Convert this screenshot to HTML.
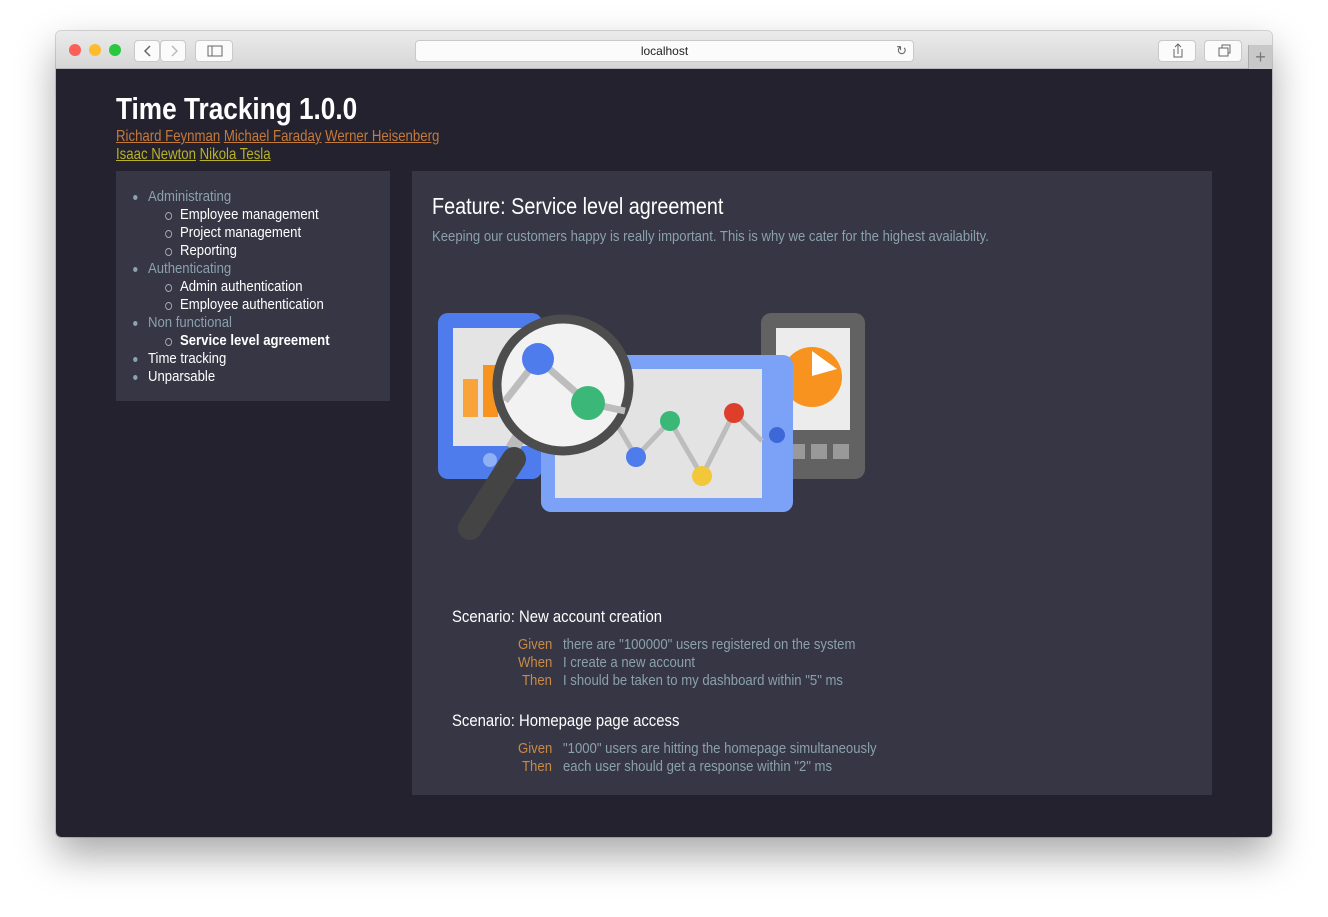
<!DOCTYPE html>
<html><head><meta charset="utf-8"><style>
*{box-sizing:border-box;margin:0;padding:0}
body{width:1328px;height:917px;background:#fff;position:relative;overflow:hidden;font-family:"Liberation Sans",sans-serif}
.win{position:absolute;left:56px;top:31px;width:1216px;height:806px;border-radius:5px;overflow:hidden;box-shadow:0 18px 40px rgba(0,0,0,.35),0 0 0 1px rgba(0,0,0,.15)}
.bar{position:absolute;left:0;top:0;width:100%;height:38px;background:linear-gradient(#ebebeb,#d6d6d6);border-bottom:1px solid #b8b8b8}
.dot{position:absolute;top:13px;width:12px;height:12px;border-radius:50%}
.btn{position:absolute;top:9px;height:22px;background:#fbfbfb;border:1px solid #c9c9c9;border-radius:4px}
.content{position:absolute;left:0;top:38px;width:100%;height:768px;background:#24222f}
a{text-decoration:underline}
.side{position:absolute;left:60px;top:102px;width:274px;height:230px;background:#373645}
.side div{position:absolute;font-size:15px;white-space:nowrap;transform:scaleX(.875);transform-origin:0 0;top:1px}
.b1:before{content:"";position:absolute;left:-17px;top:7px;width:5px;height:5px;border-radius:50%;background:#8aa4ad}
.b2:before{content:"";position:absolute;left:-17px;top:6px;width:6px;height:6px;border-radius:50%;border:1px solid #aab}
.main{position:absolute;left:356px;top:102px;width:800px;height:624px;background:#373645}
.t{position:absolute;white-space:nowrap;transform:scaleX(.875);transform-origin:0 0}
.k{color:#c98a43}.v{color:#8aa1ab}
</style></head><body>
<div class="win">
 <div class="bar">
  <div class="dot" style="left:13px;background:#fc5f57"></div>
  <div class="dot" style="left:33px;background:#fdbc2e"></div>
  <div class="dot" style="left:53px;background:#28c840"></div>
  <div class="btn" style="left:78px;width:26px"><svg width="26" height="20"><path d="M15 5l-5 5 5 5" stroke="#666" stroke-width="1.5" fill="none"/></svg></div>
  <div class="btn" style="left:104px;width:26px"><svg width="26" height="20"><path d="M11 5l5 5-5 5" stroke="#bbb" stroke-width="1.5" fill="none"/></svg></div>
  <div class="btn" style="left:139px;width:38px"><svg width="38" height="20"><rect x="12" y="5" width="14" height="10" stroke="#666" fill="none"/><line x1="16" y1="5" x2="16" y2="15" stroke="#666"/></svg></div>
  <div class="btn" style="left:359px;width:499px;text-align:center;font-size:12px;line-height:20px;color:#222">localhost<span style="position:absolute;right:6px;top:0;color:#666;font-size:13px">↻</span></div>
  <div class="btn" style="left:1102px;width:38px"><svg width="38" height="20"><path d="M15 8v8h8V8M19 3v10M16 6l3-3 3 3" stroke="#666" fill="none"/></svg></div>
  <div class="btn" style="left:1148px;width:38px"><svg width="38" height="20"><rect x="14" y="7" width="9" height="8" stroke="#666" fill="none"/><path d="M17 7V4h8v8h-2" stroke="#666" fill="none"/></svg></div>
  <div style="position:absolute;left:1192px;top:14px;width:24px;height:24px;background:#c8c8c8;border-left:1px solid #aaa;text-align:center;color:#777;font-size:18px;line-height:24px">+</div>
 </div>
 <div class="content">
  <div class="t" style="left:60px;top:22px;font-size:31px;font-weight:bold;color:#fff;transform:scaleX(.845)">Time Tracking 1.0.0</div>
  <div class="t" style="left:60px;top:59px;font-size:16px;color:#c47a3a;transform:scaleX(.825)"><a>Richard Feynman</a> <a>Michael Faraday</a> <a>Werner Heisenberg</a></div>
  <div class="t" style="left:60px;top:77px;font-size:16px;color:#b8b22a;transform:scaleX(.825)"><a>Isaac Newton</a> <a>Nikola Tesla</a></div>
  <div class="side">
   <div class="b1" style="left:32px;top:17px;color:#8aa1ab">Administrating</div>
   <div class="b2" style="left:64px;top:35px;color:#fff">Employee management</div>
   <div class="b2" style="left:64px;top:53px;color:#fff">Project management</div>
   <div class="b2" style="left:64px;top:71px;color:#fff">Reporting</div>
   <div class="b1" style="left:32px;top:89px;color:#8aa1ab">Authenticating</div>
   <div class="b2" style="left:64px;top:107px;color:#fff">Admin authentication</div>
   <div class="b2" style="left:64px;top:125px;color:#fff">Employee authentication</div>
   <div class="b1" style="left:32px;top:143px;color:#8aa1ab">Non functional</div>
   <div class="b2" style="left:64px;top:161px;color:#fff;font-weight:bold">Service level agreement</div>
   <div class="b1" style="left:32px;top:179px;color:#fff">Time tracking</div>
   <div class="b1" style="left:32px;top:197px;color:#fff">Unparsable</div>
  </div>
  <div class="main">
   <div class="t" style="left:20px;top:22px;font-size:23px;color:#fff;transform:scaleX(.86)">Feature: Service level agreement</div>
   <div class="t v" style="left:20px;top:57px;font-size:15px;transform:scaleX(.875)">Keeping our customers happy is really important. This is why we cater for the highest availabilty.</div>
   <svg style="position:absolute;left:18px;top:130px" width="450" height="250" viewBox="430 300 450 250">
    <rect x="438" y="312" width="104" height="166" rx="10" fill="#4f7cec"/>
    <rect x="453" y="327" width="78" height="118" fill="#e4e4e4"/>
    <circle cx="490" cy="459" r="7" fill="#8fb0f5"/>
    <rect x="463" y="378" width="15" height="38" fill="#f9a33b"/><rect x="483" y="364" width="15" height="52" fill="#f7931e"/>
    <rect x="761" y="312" width="104" height="166" rx="10" fill="#626262"/>
    <rect x="776" y="327" width="74" height="102" fill="#ececec"/>
    <circle cx="812" cy="376" r="30" fill="#f7931e"/><path d="M812 350l25 18-25 7z" fill="#fff"/>
    <rect x="793" y="443" width="12" height="15" fill="#999"/><rect x="811" y="443" width="16" height="15" fill="#999"/><rect x="833" y="443" width="16" height="15" fill="#999"/>
    <rect x="541" y="354" width="252" height="157" rx="10" fill="#7ba2f6"/>
    <rect x="555" y="368" width="207" height="129" fill="#e3e3e3"/>
    <polyline points="612,415 636,456 670,420 702,475 734,412 762,440" stroke="#bdbdbd" stroke-width="5" fill="none"/>
    <circle cx="636" cy="456" r="10" fill="#4f7cec"/><circle cx="670" cy="420" r="10" fill="#3bb878"/><circle cx="702" cy="475" r="10" fill="#f2c73a"/><circle cx="734" cy="412" r="10" fill="#de3f2b"/><circle cx="777" cy="434" r="8" fill="#3e68d8"/>
    <line x1="512" y1="448" x2="522" y2="432" stroke="#bbb" stroke-width="14"/>
    <line x1="514" y1="458" x2="470" y2="527" stroke="#444" stroke-width="24" stroke-linecap="round"/>
    <circle cx="563" cy="384" r="66" fill="#f2f2f2" stroke="#4d4d4d" stroke-width="9"/>
    <polyline points="505,400 538,358 588,402 625,410" stroke="#bdbdbd" stroke-width="7" fill="none"/>
    <circle cx="538" cy="358" r="16" fill="#4f7cec"/><circle cx="588" cy="402" r="17" fill="#3bb878"/>
   </svg>
   <div class="t" style="left:40px;top:436px;font-size:17px;color:#fff">Scenario: New account creation</div>
   <div class="t k" style="left:106px;top:465px;font-size:15px">Given</div><div class="t v" style="left:151px;top:465px;font-size:15px">there are "100000" users registered on the system</div>
   <div class="t k" style="left:106px;top:483px;font-size:15px">When</div><div class="t v" style="left:151px;top:483px;font-size:15px">I create a new account</div>
   <div class="t k" style="left:110px;top:501px;font-size:15px">Then</div><div class="t v" style="left:151px;top:501px;font-size:15px">I should be taken to my dashboard within "5" ms</div>
   <div class="t" style="left:40px;top:540px;font-size:17px;color:#fff">Scenario: Homepage page access</div>
   <div class="t k" style="left:106px;top:569px;font-size:15px">Given</div><div class="t v" style="left:151px;top:569px;font-size:15px">"1000" users are hitting the homepage simultaneously</div>
   <div class="t k" style="left:110px;top:587px;font-size:15px">Then</div><div class="t v" style="left:151px;top:587px;font-size:15px">each user should get a response within "2" ms</div>
  </div>
 </div>
</div>
</body></html>
